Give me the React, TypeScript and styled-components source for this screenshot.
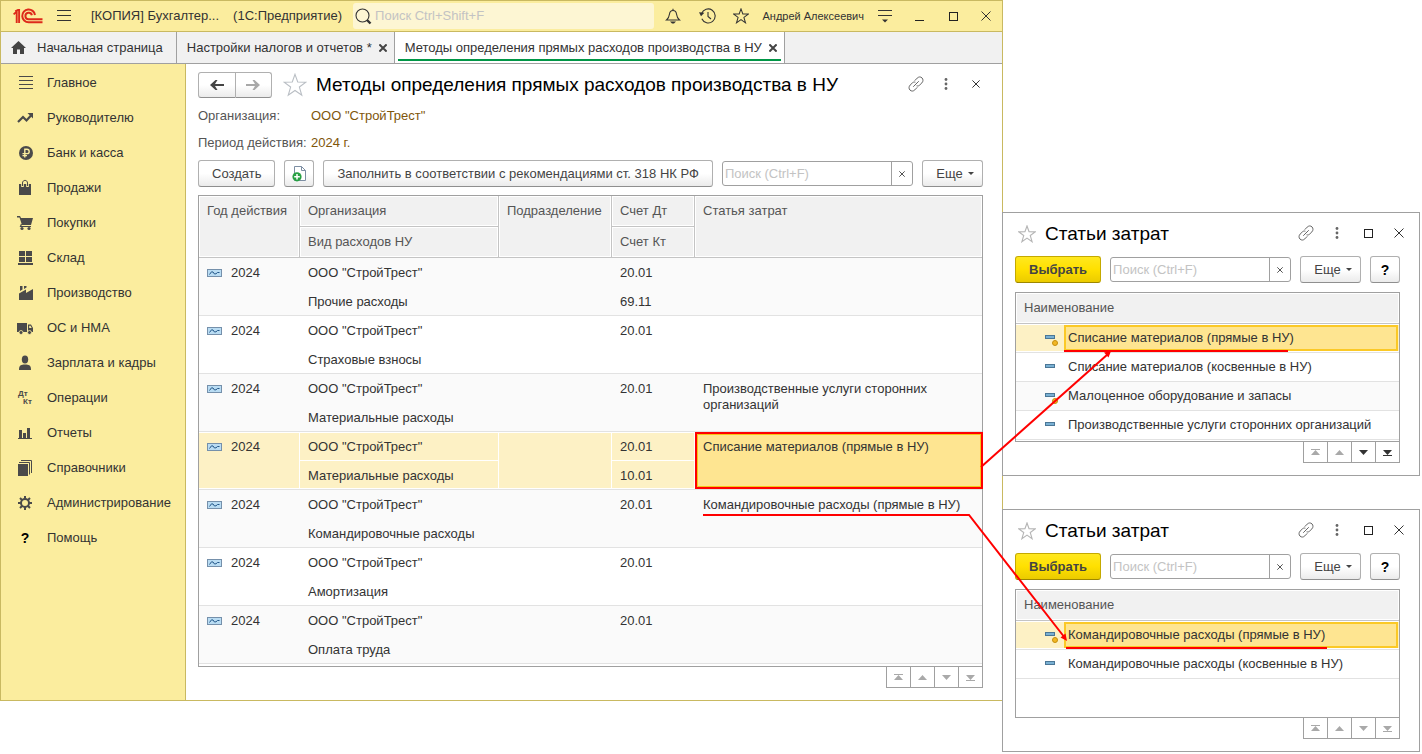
import React from "react";
import styled, { createGlobalStyle, css } from "styled-components";

const GlobalStyle = createGlobalStyle`
  *, *::before, *::after { box-sizing: border-box; }
  body {
    margin: 0;
    background: #fff;
    color: #333;
    font: 13px/16px "Liberation Sans", Arial, sans-serif;
  }
  button, input { font: inherit; color: inherit; }
  button { cursor: pointer; }
  svg { display: block; flex: none; }
`;

const Page = styled.div`
  display: flex;
  align-items: flex-start;
  padding-right: 2px;
`;

const MainWindow = styled.div`
  flex: 1;
  min-width: 0;
  border: 1px solid #c9b961;
  background: #fff;
`;

/* Title bar */

const TitleBar = styled.header`
  display: flex;
  align-items: center;
  height: 31px;
  background: #fbed9e;
  border-bottom: 1px solid #c9b961;
`;

const Brand = styled.div`
  display: flex;
  align-items: center;
  gap: 14px;
  padding: 0 11px 0 12px;
  white-space: nowrap;
`;

const BrandText = styled.span`
  padding-left: 6px;
`;

const GlobalSearch = styled.label`
  flex: 1;
  min-width: 0;
  display: flex;
  align-items: center;
  gap: 3px;
  height: 26px;
  margin-right: 2px;
  padding-left: 2px;
  border-radius: 3px;
  background: #fdf6d3;
`;

const SearchInput = styled.input`
  flex: 1;
  min-width: 0;
  padding: 0;
  border: 0;
  outline: 0;
  background: none;
  &::placeholder { color: #c3c3c3; opacity: 1; }
`;

const BarButton = styled.button`
  flex: none;
  display: flex;
  align-items: center;
  justify-content: center;
  width: 34px;
  height: 30px;
  padding: 0;
  border: 0;
  background: none;
  &:last-child { width: 32px; }
`;

const UserName = styled.span`
  padding: 0 4px;
  font-size: 11px;
  white-space: nowrap;
`;

/* Tabs */

const Tabs = styled.nav`
  display: flex;
  height: 32px;
  background: #f1f1f1;
  border-bottom: 1px solid #a0a0a0;
`;

const Tab = styled.div<{ $active?: boolean }>`
  display: flex;
  align-items: center;
  gap: 7px;
  padding: 0 7px 0 10px;
  border-right: 1px solid #a0a0a0;
  white-space: nowrap;
  ${(p) =>
    p.$active &&
    css`
      background: linear-gradient(#009646, #009646) 3px 27px / calc(100% - 6px) 2px no-repeat #fff;
    `}
`;

const TabLink = styled.a`
  display: flex;
  align-items: center;
  gap: 11px;
  color: inherit;
  text-decoration: none;
`;

const HomeTab = styled(Tab)`
  padding: 0 13px 0 10px;
`;

const TabClose = styled.button`
  padding: 0;
  border: 0;
  background: none;
`;

/* Sidebar */

const Body = styled.div`
  display: flex;
`;

const Sidebar = styled.nav`
  flex: none;
  width: 185px;
  padding-top: 1px;
  background: #fbed9e;
  border-right: 1px solid #c9b961;
`;

const SideLink = styled.a`
  display: flex;
  align-items: center;
  gap: 13px;
  height: 35px;
  padding-left: 15px;
  color: inherit;
  text-decoration: none;
`;

/* Form */

const Content = styled.main`
  flex: 1;
  min-width: 0;
  padding: 8px 19px 12px 12px;
`;

const FormHeader = styled.div`
  display: flex;
  align-items: center;
  height: 26px;
`;

const FormTitle = styled.h1`
  flex: 1;
  margin: 0;
  padding-left: 9px;
  color: #000;
  font-size: 19px;
  font-weight: 400;
  line-height: 24px;
  white-space: nowrap;
`;

const NavButtons = styled.div`
  display: flex;
  width: 74px;
  height: 26px;
  margin-right: 11px;
`;

const raised = css`
  border: 1px solid #b0b0b0;
  border-bottom-color: #8f8f8f;
  background: linear-gradient(#fff 50%, #ebebeb);
`;

const NavButton = styled.button`
  ${raised}
  flex: 1;
  display: flex;
  align-items: center;
  justify-content: center;
  padding: 0;
  border-radius: 3px 0 0 3px;
  & + & { border-left: 0; border-radius: 0 3px 3px 0; }
`;

const HeaderButton = styled.button`
  display: flex;
  align-items: center;
  justify-content: center;
  width: 30px;
  height: 24px;
  padding: 0;
  border: 0;
  background: none;
`;

const HeaderActions = styled.div`
  display: flex;
  align-self: flex-start;
  margin-right: -8px;
`;

const Params = styled.dl`
  display: grid;
  grid-template-columns: 113px 1fr;
  row-gap: 11px;
  margin: 10px 0 9px;
`;

const ParamName = styled.dt`
  color: #555;
  white-space: nowrap;
`;

const ParamValue = styled.dd`
  margin: 0;
  color: #80560b;
`;

const Toolbar = styled.div`
  display: flex;
  align-items: center;
  gap: 9px;
  margin-bottom: 8px;
`;

const DialogToolbar = styled(Toolbar)`
  margin-bottom: 9px;
`;

const Button = styled.button<{ $primary?: boolean; $square?: boolean }>`
  ${raised}
  flex: none;
  display: flex;
  align-items: center;
  justify-content: center;
  gap: 5px;
  height: 27px;
  padding: ${(p) => (p.$square ? 0 : "0 13px")};
  width: ${(p) => (p.$square ? "30px" : "auto")};
  border-radius: 3px;
  color: #444;
  white-space: nowrap;
  ${(p) =>
    p.$primary &&
    css`
      border-color: #c4a900;
      border-bottom-color: #9d8700;
      background: linear-gradient(#ffe81f, #ffe000 50%, #ebcb00);
      font-weight: 700;
    `}
`;

const MoreButton = styled(Button)`
  width: 61px;
  padding: 0 0 0 5px;
`;

const HelpButton = styled(Button)`
  color: #000;
  font-size: 14px;
  font-weight: 700;
`;

const SearchBox = styled.label`
  flex: 1;
  min-width: 0;
  display: flex;
  height: 25px;
  padding-left: 2px;
  border: 1px solid #a0a0a0;
  border-radius: 3px;
`;

const ClearButton = styled.button`
  display: flex;
  align-items: center;
  justify-content: center;
  width: 21px;
  padding: 0;
  border: 0;
  border-left: 1px solid #a0a0a0;
  background: none;
`;

const TableFrame = styled.div<{ $minHeight?: number }>`
  padding-bottom: ${(p) => (p.$minHeight ? 1 : 2)}px;
  min-height: ${(p) => p.$minHeight ?? 0}px;
  border: 1px solid #a0a0a0;
`;

const Table = styled.table`
  width: 100%;
  table-layout: fixed;
  border-collapse: separate;
  border-spacing: 0;
`;

const Th = styled.th`
  height: 31px;
  padding: 7px 7px 7px 8px;
  border-bottom: 1px solid #c4c4c4;
  background: #f1f1f1;
  box-shadow: inset 0 0 0 1px #fff;
  color: #555;
  font-weight: 400;
  text-align: left;
  vertical-align: top;
  white-space: nowrap;
  border-right: 1px solid #c4c4c4;
  &.last { border-right: 0; }
`;

const Td = styled.td<{ $end?: boolean }>`
  position: relative;
  height: 29px;
  padding: 7px 8px 5px;
  border-bottom: ${(p) => (p.$end ? "1px solid #e2e2e2" : "0")};
  vertical-align: top;
`;

const Record = styled.tbody<{ $selected?: boolean }>`
  &:nth-of-type(odd) { background: #fafafa; }
  &:nth-of-type(even) { background: #fff; }
  ${(p) =>
    p.$selected &&
    css`
      ${Td} {
        background: #fdf1c5;
        box-shadow: inset -1px -1px #fff;
      }
      tr:first-child ${Td} {
        box-shadow: inset -1px -1px #fff, inset 0 1px #fff;
      }
    `}
`;

const CurrentCell = styled.div`
  position: absolute;
  inset: 0 -1px 0 0;
  padding: 5px 6px;
  border: 2px solid #f00;
  box-shadow: inset 0 0 0 1px #f5c518;
  background: #fee591;
`;

const YearCell = styled.div`
  display: flex;
  align-items: center;
  gap: 9px;
`;

const Pager = styled.div`
  display: flex;
  justify-content: flex-end;
`;

const PagerButton = styled.button`
  display: flex;
  align-items: center;
  justify-content: center;
  width: 24px;
  height: 21px;
  padding: 0;
  border: 1px solid #a0a0a0;
  border-width: 0 1px 1px 0;
  background: #fff;
  color: #333;
  &:disabled { color: #a9a9a9; }
  &:first-child { width: 25px; border-left-width: 1px; }
`;

/* Selection dialogs */

const SideColumn = styled.aside`
  position: relative;
  flex: none;
  display: flex;
  flex-direction: column;
  gap: 33px;
  width: 418px;
  margin-left: -1px;
  padding-top: 212px;
`;

const Dialog = styled.section`
  padding: 8px 19px 12px 12px;
  border: 1px solid #a0a0a0;
  background: #fff;
`;

const DialogHeader = styled(FormHeader)`
  padding-left: 3px;
  margin-bottom: 9px;
`;

const DialogActions = styled(HeaderActions)`
  gap: 1px;
  margin-right: -14px;
`;

const ListTh = styled(Th)`
  border-right: 0;
`;

const ListCell = styled.td`
  height: 29px;
  padding: 1px 1px 1px 0;
  border-bottom: 1px solid #e2e2e2;
`;

const ListRow = styled.tr<{ $selected?: boolean }>`
  &:nth-child(odd) { background: #fafafa; }
  &:nth-child(even) { background: #fff; }
  ${(p) =>
    p.$selected &&
    css`
      ${ListCell} {
        background: #fdf1c5;
        box-shadow: inset 0 1px #fff, inset 0 -1px #fff;
      }
    `}
`;

const ListItem = styled.div`
  display: flex;
  align-items: center;
  height: 26px;
  padding-left: 29px;
`;

const ListText = styled.span<{ $current?: boolean }>`
  flex: 1;
  height: 26px;
  padding: 2px;
  border: 2px solid ${(p) => (p.$current ? "#fbc926" : "transparent")};
  background: ${(p) => (p.$current ? "#fee591" : "none")};
  line-height: 18px;
  white-space: nowrap;
`;

/* Arrows drawn over both windows, tied to the edge between them */
const Annotations = styled.svg`
  position: absolute;
  top: 0;
  left: -302px;
  pointer-events: none;
`;

/* Icons */

const Logo = () => (
  <svg width="30" height="16" viewBox="0 0 30 16" fill="none" stroke="#dd2a1b">
    <path d="M.6 6.4 L3.7 3.6 V15 M2.2 3.3 L5 1.9 H6.1 V15" strokeWidth="1.9" />
    <path d="M22 7 A6.4 6.4 0 1 0 15.6 14.3 H29.5" strokeWidth="2" />
    <path d="M18.900 7.200 A3.300 3.300 0 1 0 15.600 11.300 H29.500" strokeWidth="2" />
  </svg>
);

const Burger = () => (
  <svg width="14" height="12" viewBox="0 0 14 12" stroke="#333">
    <path d="M0 .5H14M0 5.5H14M0 10.5H14" />
  </svg>
);

const Magnifier = () => (
  <svg width="17" height="17" viewBox="0 0 17 17" fill="none" stroke="#333">
    <circle cx="7.5" cy="7.500" r="6.500" strokeWidth="1.1" />
    <path d="M12 12 L15.500 15.500" strokeWidth="2.4" />
  </svg>
);

const Bell = () => (
  <svg width="16" height="16" viewBox="0 0 16 16" fill="none" stroke="#333" strokeWidth="1.1">
    <path d="M1.5 12 C4 10 4.2 8.500 4.500 6 C4.800 3.600 6 2.500 8 2.500 S11.200 3.600 11.500 6 C11.800 8.500 12 10 14.500 12 Z" />
    <path d="M8 2.5 V.8" />
    <path d="M5 13.500 H11 L9 15.500 H7 Z" fill="#333" stroke="none" />
  </svg>
);

const History = () => (
  <svg width="17" height="16" viewBox="0 0 17 16" fill="none" stroke="#333" strokeWidth="1.1">
    <path d="M2.6 5.5 A7 7 0 1 1 2.8 10.8" />
    <path d="M9 4 V8.5 L12 11" />
    <path d="M0 4.2 L5.4 4.8 L2 8.2 Z" fill="#333" stroke="none" />
  </svg>
);

const Star = ({ size = 16, color = "#333" }: { size?: number; color?: string }) => (
  <svg width={size} height={size} viewBox="0 0 22 22" fill="none" stroke={color} strokeWidth={size > 20 ? 1 : 1.4}>
    <path d="M11 1.2 L13.5 8.3 L21 8.4 L15 12.9 L17.2 20.4 L11 16 L4.8 20.4 L7 12.9 L1 8.4 L8.5 8.3 Z" />
  </svg>
);

const SettingsMenu = () => (
  <svg width="14" height="13" viewBox="0 0 14 13" stroke="#333">
    <path d="M0 .5H14M0 5.5H14" />
    <path d="M4 9.5 H10 L7 12.5 Z" fill="#333" stroke="none" />
  </svg>
);

const Minimize = () => (
  <svg width="9" height="12" viewBox="0 0 9 12" stroke="#222">
    <path d="M0 10.5H9" />
  </svg>
);

const Maximize = () => (
  <svg width="9" height="9" viewBox="0 0 9 9" fill="none" stroke="#222">
    <rect x=".5" y=".5" width="8" height="8" />
  </svg>
);

const Cross = ({ size = 10, width = 1, color = "#333" }: { size?: number; width?: number; color?: string }) => (
  <svg width={size} height={size} viewBox="0 0 10 10" stroke={color} strokeWidth={(width * 10) / size}>
    <path d="M.5 .5 L9.5 9.5 M9.5 .5 L.5 9.5" />
  </svg>
);

const Chain = () => (
  <svg width="16" height="16" viewBox="0 0 16 16" fill="none" stroke="#666" strokeLinecap="round">
    <path d="M7 4.400 L9.200 2.100 C10.600 .7 12.600 .5 14 1.900 C15.400 3.300 15.200 5.500 13.900 6.900 L11.400 9.300 C10.600 10 9.800 10.100 9 9.900" />
    <path d="M9 11.600 L6.800 13.900 C5.400 15.300 3.400 15.500 2 14.100 C.6 12.700 .8 10.500 2.100 9.100 L4.600 6.700 C5.400 6 6.200 5.900 7 6.100" />
    <path d="M5.500 10.500 L10.500 5.500" />
  </svg>
);

const Dots = () => (
  <svg width="4" height="12" viewBox="0 0 4 12" fill="#666">
    <circle cx="2" cy="1.5" r="1.4" />
    <circle cx="2" cy="6" r="1.4" />
    <circle cx="2" cy="10.5" r="1.4" />
  </svg>
);

const Arrow = ({ forward }: { forward?: boolean }) => (
  <svg width="14" height="12" viewBox="0 0 14 12" fill={forward ? "#a8a8a8" : "#444"}>
    {forward ? (
      <path d="M0 5 H9 L6.500 1 H8.500 L14 6 L8.500 11 H6.500 L9 7 H0 Z" />
    ) : (
      <path d="M14 5 H5 L7.500 1 H5.500 L0 6 L5.500 11 H7.500 L5 7 H14 Z" />
    )}
  </svg>
);

const Caret = () => (
  <svg width="6" height="3" viewBox="0 0 6 3" fill="#444">
    <path d="M0 0 H6 L3 3 Z" />
  </svg>
);

const Home = () => (
  <svg width="15" height="14" viewBox="0 0 15 14" fill="#444">
    <path d="M7.5 0 L15 7 H13 V13 H9 V8.5 H6 V13 H2 V7 H0 Z" />
  </svg>
);

const AddDocument = () => (
  <svg width="15" height="16" viewBox="0 0 15 16" fill="none">
    <path d="M2.5 .5 H9.5 L13.5 4.5 V14.5 H2.5 Z" fill="#fff" stroke="#7d8ea3" />
    <path d="M9.5 .5 V4.5 H13.5" stroke="#7d8ea3" />
    <circle cx="5" cy="10.8" r="4.6" fill="#27a043" />
    <path d="M5 8 V13.6 M2.2 10.8 H7.8" stroke="#fff" strokeWidth="1.5" />
  </svg>
);

const RecordIcon = () => (
  <svg width="15" height="8" viewBox="0 0 15 8" fill="none">
    <rect x=".5" y=".5" width="14" height="7" fill="#b9dcf3" stroke="#7590ab" />
    <path d="M2.5 5.5 L4.5 2.8 L6 3 L7.5 5 L9 4.8 L10.5 3.5 H12.5" stroke="#23588a" />
  </svg>
);

const ItemIcon = ({ marked }: { marked?: boolean }) => (
  <svg width="19" height="16" viewBox="0 0 19 16">
    <rect x=".5" y="5.5" width="9" height="3" fill="#79b0d3" stroke="#4b7796" />
    {marked && <circle cx="10" cy="13" r="2.5" fill="#f2b725" stroke="#c68f0d" />}
  </svg>
);

const PagerIcon = ({ kind }: { kind: string }) => (
  <svg width="11" height="7" viewBox="0 0 11 7" fill="currentColor">
    {kind === "first" && <path d="M1 0 H10 V1 H1 Z M5.5 1 L10 6 H1 Z" />}
    {kind === "prev" && <path d="M5.5 1 L10 6 H1 Z" />}
    {kind === "next" && <path d="M1 1 H10 L5.5 6 Z" />}
    {kind === "last" && <path d="M1 1 H10 L5.5 6 Z M1 6 H10 V7 H1 Z" />}
  </svg>
);

const ink = "#4a4a4a";

const sideIcons: Record<string, React.ReactNode> = {
  main: <path d="M3 2.5H17M3 6.5H17M3 10.5H17M3 14.5H17" stroke={ink} />,
  trend: (
    <>
      <path d="M2 13 L7 8 L10.5 11.500 L15 6.500" fill="none" stroke={ink} strokeWidth="2.2" />
      <path d="M11.5 4 H17 V9.5 Z" />
    </>
  ),
  ruble: (
    <>
      <circle cx="10" cy="9" r="7" />
      <path d="M8.800 13.500 V5.200 H11 A2.200 2.200 0 0 1 11 9.600 H6.500 M6.500 11.600 H11" fill="none" stroke="#fbed9e" strokeWidth="1.4" />
    </>
  ),
  bag: (
    <>
      <path d="M3 5 H15 V16 H3 Z" />
      <path d="M6.5 8 V4 C6.5 .5 11.500 .5 11.500 4 V8" fill="none" stroke="#fbed9e" strokeWidth="2.6" />
      <path d="M6.5 7 V4 C6.5 .5 11.500 .5 11.500 4 V7" fill="none" stroke={ink} />
    </>
  ),
  cart: (
    <>
      <path d="M1 2 H4 L5 4 H17 L15 11 H6 L3.5 3.5 H1 Z" />
      <path d="M5.5 10 L4.5 12.500 H15" fill="none" stroke={ink} strokeWidth="1.2" />
      <circle cx="6" cy="14.500" r="1.6" />
      <circle cx="13" cy="14.500" r="1.6" />
    </>
  ),
  store: <path d="M3 2 H9 V7 H3 Z M10 2 H16 V7 H10 Z M3 8 H9 V13 H3 Z M10 8 H16 V13 H10 Z M2 14 H17 V16 H2 Z" />,
  factory: <path d="M3 16 V9.5 L10 5.5 V9 L17 5 V16 Z M4 2 H6.5 V5.5 L4 7 Z M8 2 H10.5 V3.5 L8 5 Z" />,
  truck: (
    <>
      <path d="M1 4 H11 V13 H1 Z M12 5.5 H15 L17 9 V13 H12 Z" />
      <path d="M13.2 6.7 H14.5 L15.7 9 H13.2 Z" fill="#fbed9e" />
      <circle cx="5" cy="13.5" r="2" stroke="#fbed9e" strokeWidth=".8" />
      <circle cx="13.5" cy="13.5" r="2" stroke="#fbed9e" strokeWidth=".8" />
    </>
  ),
  person: (
    <>
      <ellipse cx="9" cy="5.500" rx="3.200" ry="4" />
      <path d="M3 16 C3 11.5 4.5 11 7.5 10.5 H10.5 C13.5 11 15 11.5 15 16 Z" />
    </>
  ),
  chart: <path d="M2 14 H16 V15 H2 Z M3 6 H6 V14 H3 Z M7 9 H10 V14 H7 Z M11 4 H14 V14 H11 Z" />,
  books: (
    <>
      <path d="M2 5 H12 V17 H2 Z" />
      <path d="M3 3.500 H13.500 V15.500 M5 1.500 H15.500 V14" fill="none" stroke={ink} />
    </>
  ),
  gear: (
    <>
      <circle cx="9" cy="9" r="4" fill="none" stroke={ink} strokeWidth="2" />
      <path
        d="M9 2 V5 M9 13 V16 M2 9 H5 M13 9 H16 M4 4 L6.2 6.2 M11.8 11.8 L14 14 M14 4 L11.8 6.2 M6.2 11.8 L4 14"
        stroke={ink}
        strokeWidth="2"
      />
    </>
  ),
};

const GlyphIcon = styled.span<{ $small?: boolean }>`
  display: flex;
  flex-direction: column;
  width: 18px;
  color: ${(p) => (p.$small ? ink : "#000")};
  font-size: ${(p) => (p.$small ? 8 : 14)}px;
  font-weight: 700;
  line-height: ${(p) => (p.$small ? 8 : 16)}px;
  text-align: ${(p) => (p.$small ? "left" : "center")};
  padding-left: ${(p) => (p.$small ? 2 : 0)}px;
  & > :last-child:not(:first-child) { padding-left: 5px; }
`;

const sections: [string, string][] = [
  ["main", "Главное"],
  ["trend", "Руководителю"],
  ["ruble", "Банк и касса"],
  ["bag", "Продажи"],
  ["cart", "Покупки"],
  ["store", "Склад"],
  ["factory", "Производство"],
  ["truck", "ОС и НМА"],
  ["person", "Зарплата и кадры"],
  ["entries", "Операции"],
  ["chart", "Отчеты"],
  ["books", "Справочники"],
  ["gear", "Администрирование"],
  ["help", "Помощь"],
];

const SideIcon = ({ name }: { name: string }) => {
  if (name === "entries") {
    return (
      <GlyphIcon $small>
        <span>Дт</span>
        <span>Кт</span>
      </GlyphIcon>
    );
  }
  if (name === "help") {
    return (
      <GlyphIcon>
        <span>?</span>
      </GlyphIcon>
    );
  }
  return (
    <svg width="18" height="18" viewBox="0 0 18 18" fill={ink}>
      {sideIcons[name]}
    </svg>
  );
};

type Row = { kind: string; dt: string; kt?: string; item?: string; selected?: boolean };

const rows: Row[] = [
  { kind: "Прочие расходы", dt: "20.01", kt: "69.11" },
  { kind: "Страховые взносы", dt: "20.01" },
  { kind: "Материальные расходы", dt: "20.01", item: "Производственные услуги сторонних организаций" },
  { kind: "Материальные расходы", dt: "20.01", kt: "10.01", item: "Списание материалов (прямые в НУ)", selected: true },
  { kind: "Командировочные расходы", dt: "20.01", item: "Командировочные расходы (прямые в НУ)" },
  { kind: "Амортизация", dt: "20.01" },
  { kind: "Оплата труда", dt: "20.01" },
];

const pagerKinds: [string, string][] = [
  ["first", "В начало"],
  ["prev", "Назад"],
  ["next", "Вперед"],
  ["last", "В конец"],
];

const PagerBar = ({ enabled = [] }: { enabled?: string[] }) => (
  <Pager>
    {pagerKinds.map(([kind, label]) => (
      <PagerButton key={kind} aria-label={label} disabled={!enabled.includes(kind)}>
        <PagerIcon kind={kind} />
      </PagerButton>
    ))}
  </Pager>
);

const ListSearch = () => (
  <SearchBox>
    <SearchInput aria-label="Поиск" placeholder="Поиск (Ctrl+F)" />
    <ClearButton aria-label="Очистить">
      <Cross size={6} color="#555" width={1} />
    </ClearButton>
  </SearchBox>
);

type Item = { name: string; marked?: boolean };

const CostItemsDialog = ({ items, height, enabled }: { items: Item[]; height: number; enabled?: string[] }) => (
  <Dialog aria-label="Статьи затрат">
    <DialogHeader>
      <Star size={18} color="#b5b5b5" />
      <FormTitle as="h2">Статьи затрат</FormTitle>
      <DialogActions>
        <HeaderButton aria-label="Ссылка"><Chain /></HeaderButton>
        <HeaderButton aria-label="Меню"><Dots /></HeaderButton>
        <HeaderButton aria-label="Развернуть"><Maximize /></HeaderButton>
        <HeaderButton aria-label="Закрыть"><Cross /></HeaderButton>
      </DialogActions>
    </DialogHeader>
    <DialogToolbar>
      <Button $primary>Выбрать</Button>
      <ListSearch />
      <MoreButton>Еще <Caret /></MoreButton>
      <HelpButton $square>?</HelpButton>
    </DialogToolbar>
    <TableFrame $minHeight={height}>
      <Table>
        <thead>
          <tr>
            <ListTh>Наименование</ListTh>
          </tr>
        </thead>
        <tbody>
          {items.map((item, i) => (
            <ListRow key={item.name} $selected={i === 0}>
              <ListCell>
                <ListItem>
                  <ItemIcon marked={item.marked} />
                  <ListText $current={i === 0}>{item.name}</ListText>
                </ListItem>
              </ListCell>
            </ListRow>
          ))}
        </tbody>
      </Table>
    </TableFrame>
    <PagerBar enabled={enabled} />
  </Dialog>
);

export default function App() {
  return (
    <>
      <GlobalStyle />
      <Page>
        <MainWindow>
          <TitleBar>
            <Brand>
              <Logo />
              <Burger />
              <BrandText>[КОПИЯ] Бухгалтер...</BrandText>
              <span>(1С:Предприятие)</span>
            </Brand>
            <GlobalSearch>
              <Magnifier />
              <SearchInput aria-label="Поиск" placeholder="Поиск Ctrl+Shift+F" />
            </GlobalSearch>
            <BarButton aria-label="Уведомления"><Bell /></BarButton>
            <BarButton aria-label="История"><History /></BarButton>
            <BarButton aria-label="Избранное"><Star /></BarButton>
            <UserName>Андрей Алексеевич</UserName>
            <BarButton aria-label="Настройки"><SettingsMenu /></BarButton>
            <BarButton aria-label="Свернуть"><Minimize /></BarButton>
            <BarButton aria-label="Развернуть"><Maximize /></BarButton>
            <BarButton aria-label="Закрыть"><Cross /></BarButton>
          </TitleBar>
          <Tabs>
            <HomeTab>
              <TabLink href="#"><Home />Начальная страница</TabLink>
            </HomeTab>
            <Tab>
              <TabLink href="#">Настройки налогов и отчетов *</TabLink>
              <TabClose aria-label="Закрыть вкладку"><Cross size={8} width={2} color="#444" /></TabClose>
            </Tab>
            <Tab $active>
              <TabLink href="#">Методы определения прямых расходов производства в НУ</TabLink>
              <TabClose aria-label="Закрыть вкладку"><Cross size={8} width={2} color="#444" /></TabClose>
            </Tab>
          </Tabs>
          <Body>
            <Sidebar>
              {sections.map(([icon, label]) => (
                <SideLink key={icon} href="#">
                  <SideIcon name={icon} />
                  {label}
                </SideLink>
              ))}
            </Sidebar>
            <Content>
              <FormHeader>
                <NavButtons>
                  <NavButton aria-label="Назад"><Arrow /></NavButton>
                  <NavButton aria-label="Вперед"><Arrow forward /></NavButton>
                </NavButtons>
                <Star size={24} color="#b9bec4" />
                <FormTitle>Методы определения прямых расходов производства в НУ</FormTitle>
                <HeaderActions>
                  <HeaderButton aria-label="Ссылка"><Chain /></HeaderButton>
                  <HeaderButton aria-label="Меню"><Dots /></HeaderButton>
                  <HeaderButton aria-label="Закрыть"><Cross size={8} /></HeaderButton>
                </HeaderActions>
              </FormHeader>
              <Params>
                <ParamName>Организация:</ParamName>
                <ParamValue>ООО "СтройТрест"</ParamValue>
                <ParamName>Период действия:</ParamName>
                <ParamValue>2024 г.</ParamValue>
              </Params>
              <Toolbar>
                <Button>Создать</Button>
                <Button $square aria-label="Создать копированием"><AddDocument /></Button>
                <Button>Заполнить в соответствии с рекомендациями ст. 318 НК РФ</Button>
                <ListSearch />
                <MoreButton>Еще <Caret /></MoreButton>
              </Toolbar>
              <TableFrame>
                <Table>
                  <colgroup>
                    <col width="101" />
                    <col />
                    <col width="113" />
                    <col width="83" />
                    <col width="287" />
                  </colgroup>
                  <thead>
                    <tr>
                      <Th rowSpan={2}>Год действия</Th>
                      <Th>Организация</Th>
                      <Th rowSpan={2}>Подразделение</Th>
                      <Th>Счет Дт</Th>
                      <Th rowSpan={2} className="last">Статья затрат</Th>
                    </tr>
                    <tr>
                      <Th>Вид расходов НУ</Th>
                      <Th>Счет Кт</Th>
                    </tr>
                  </thead>
                  {rows.map((row, i) => (
                    <Record key={i} $selected={row.selected}>
                      <tr>
                        <Td rowSpan={2} $end>
                          <YearCell><RecordIcon />2024</YearCell>
                        </Td>
                        <Td>ООО "СтройТрест"</Td>
                        <Td rowSpan={2} $end />
                        <Td>{row.dt}</Td>
                        <Td rowSpan={2} $end>
                          {row.selected ? <CurrentCell>{row.item}</CurrentCell> : row.item}
                        </Td>
                      </tr>
                      <tr>
                        <Td $end>{row.kind}</Td>
                        <Td $end>{row.kt}</Td>
                      </tr>
                    </Record>
                  ))}
                </Table>
              </TableFrame>
              <PagerBar />
            </Content>
          </Body>
        </MainWindow>
        <SideColumn>
          <CostItemsDialog
            height={150}
            enabled={["next", "last"]}
            items={[
              { name: "Списание материалов (прямые в НУ)", marked: true },
              { name: "Списание материалов (косвенные в НУ)" },
              { name: "Малоценное оборудование и запасы", marked: true },
              { name: "Производственные услуги сторонних организаций" },
            ]}
          />
          <CostItemsDialog
            height={129}
            items={[
              { name: "Командировочные расходы (прямые в НУ)", marked: true },
              { name: "Командировочные расходы (косвенные в НУ)" },
            ]}
          />
          <Annotations width="720" height="752" viewBox="700 0 720 752" fill="none" stroke="#f00" strokeWidth="2">
            <path d="M981 467 L1108 354" />
            <path d="M1111 351 L1108.5 357.5 L1104 352.5 Z" fill="#f00" stroke="none" />
            <path d="M1064 351 H1288" />
            <path d="M703 515 H969 L1065 638" />
            <path d="M1067 641 L1060.5 637.5 L1065.5 633.5 Z" fill="#f00" stroke="none" />
            <path d="M1066 648 H1327" />
          </Annotations>
        </SideColumn>
      </Page>
    </>
  );
}
